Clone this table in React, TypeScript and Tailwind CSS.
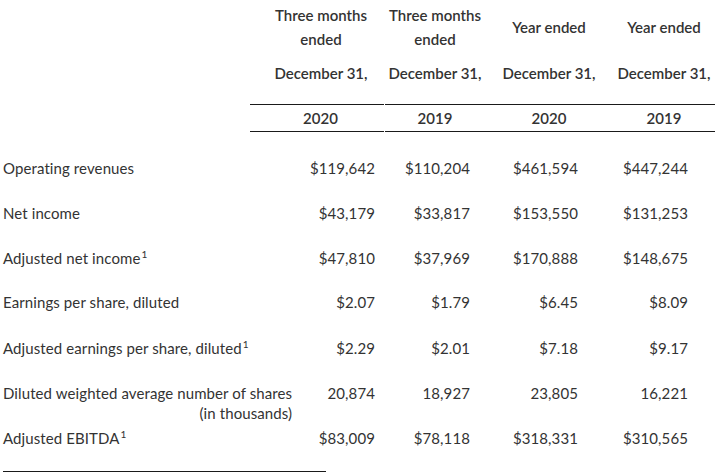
import React from "react";

type Row = { label: React.ReactNode; values: string[]; h: string };

const Sup = () => <sup className="text-[10px] -top-[6px] ml-[1px]">1</sup>;

const rows: Row[] = [
	{ label: "Operating revenues", values: ["$119,642", "$110,204", "$461,594", "$447,244"], h: "h-[45px]" },
	{ label: "Net income", values: ["$43,179", "$33,817", "$153,550", "$131,253"], h: "h-[45px]" },
	{ label: <>Adjusted net income<Sup /></>, values: ["$47,810", "$37,969", "$170,888", "$148,675"], h: "h-[44px]" },
	{ label: "Earnings per share, diluted", values: ["$2.07", "$1.79", "$6.45", "$8.09"], h: "h-[46px]" },
	{ label: <>Adjusted earnings per share, diluted<Sup /></>, values: ["$2.29", "$2.01", "$7.18", "$9.17"], h: "h-[45px]" },
	{
		label: (
			<span className="inline-flex flex-col items-end">
				<span>Diluted weighted average number of shares</span>
				<span>(in thousands)</span>
			</span>
		),
		values: ["20,874", "18,927", "23,805", "16,221"],
		h: "h-[45px]",
	},
	{ label: <>Adjusted EBITDA<Sup /></>, values: ["$83,009", "$78,118", "$318,331", "$310,565"], h: "h-[43px]" },
];

const valuePad = ["pr-[10px]", "pr-[15px]", "pr-[35px]", "pr-[27px]"];
const headPad = ["pl-[7px]", "", "", ""];

export default function App() {
	const heads = [
		["Three months", "ended"],
		["Three months", "ended"],
		["Year ended"],
		["Year ended"],
	];
	const years = ["2020", "2019", "2020", "2019"];
	return (
		<div
			className="w-[715px] h-[473px] overflow-hidden bg-white text-[#333] text-[15px]"
			style={{ fontFamily: "Lato, 'Open Sans', sans-serif" }}
		>
			{/* header */}
			<div className="grid grid-cols-[250px_135px_100px_128px_102px] pt-[3px] font-semibold">
				<div />
				{heads.map((lines, i) => (
					<div key={i} className={`h-[48px] flex flex-col items-center justify-center leading-[24px] whitespace-nowrap ${headPad[i]}`}>
						{lines.map((l) => (
							<span key={l}>{l}</span>
						))}
					</div>
				))}
				<div />
				{heads.map((_, i) => (
					<div key={i} className={`mt-[10px] leading-[24px] text-center whitespace-nowrap ${headPad[i]}`}>
						December 31,
					</div>
				))}
				<div />
				{years.map((y, i) => (
					<div
						key={y + i}
						className={`mt-[19px] h-[28px] border-y border-[#1a1a1a] flex items-center justify-center ${i === 0 ? "mr-[1px] pl-[7px]" : ""}`}
					>
						{y}
					</div>
				))}
			</div>

			{/* body */}
			<div className="mt-[26px] tracking-[0.1px]">
				{rows.map((r, ri) => (
					<div key={ri} className={`grid grid-cols-[250px_135px_100px_128px_102px] leading-[20px] ${r.h}`}>
						<div className="pl-[3px] whitespace-nowrap">{r.label}</div>
						{r.values.map((v, i) => (
							<div key={i} className={`text-right ${valuePad[i]}`}>
								{v}
							</div>
						))}
					</div>
				))}
				<div className="ml-[3px] w-[323px] border-t border-[#1a1a1a]" />
			</div>
		</div>
	);
}
